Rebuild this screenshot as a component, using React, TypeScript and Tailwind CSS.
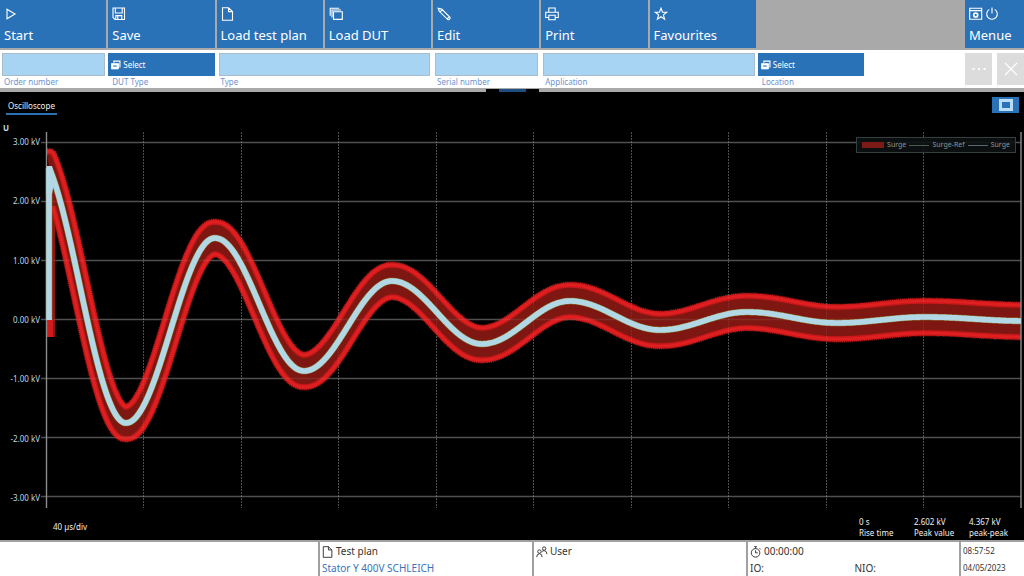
import React from "react";

type Point = [number, number];

const PLOT_WIDTH = 982;
const PLOT_HEIGHT = 376;
const AXIS_X = 6;
const END_X = 981;
const DIVISION = 97.5;

// turning points of the ringing coil response, in plot units
const extremes: Point[] = [
  [-6, 18],
  [86, 291],
  [175, 106],
  [264, 239],
  [352, 149],
  [442, 212],
  [530, 169],
  [620, 198],
  [707, 180],
  [797, 191],
  [885, 185],
  [985, 189],
];

// half axes of the rounded tolerance box swept along the curve
const TOLERANCE_X = 7;
const TOLERANCE_Y = 16;

function surgeAt(x: number) {
  const last = extremes.length - 2;
  let i = 0;
  while (i < last && x > extremes[i + 1][0]) i++;
  const [x0, y0] = extremes[i];
  const [x1, y1] = extremes[i + 1];
  const phase = Math.min(1, Math.max(0, (x - x0) / (x1 - x0)));
  return (y0 + y1) / 2 + ((y0 - y1) / 2) * Math.cos(Math.PI * phase);
}

function edgeAt(x: number, side: 1 | -1) {
  let edge = -Infinity;
  for (let d = -TOLERANCE_X; d <= TOLERANCE_X; d += 0.5) {
    const reach = TOLERANCE_Y * Math.sqrt(1 - Math.abs(d / TOLERANCE_X) ** 3);
    edge = Math.max(edge, side * surgeAt(Math.max(9, x + d)) + reach);
  }
  return side * edge;
}

function sample(from: number, fn: (x: number) => number): Point[] {
  const points: Point[] = [];
  for (let x = from; x <= END_X; x++) points.push([x, fn(x)]);
  return points;
}

const toPath = (points: Point[]) =>
  "M" + points.map(([x, y]) => `${x} ${y.toFixed(1)}`).join("L");

const upper = sample(7, (x) => edgeAt(x, -1));
const lower = sample(13, (x) => edgeAt(x, 1));
const bandPath = toPath([...upper, ...[...lower].reverse()]) + "Z";
const upperPath = toPath(upper);
const lowerPath = toPath(lower);
const surgePath = "M9 188L9 36L" + toPath(sample(10, surgeAt)).slice(1);

const ticks = [
  "3.00 kV",
  "2.00 kV",
  "1.00 kV",
  "0.00 kV",
  "-1.00 kV",
  "-2.00 kV",
  "-3.00 kV",
];

function Icon({
  children,
  className = "size-3.5",
}: {
  children: React.ReactNode;
  className?: string;
}) {
  return (
    <svg
      viewBox="0 0 14 14"
      className={className}
      fill="none"
      stroke="currentColor"
      strokeWidth="1.1"
      aria-hidden="true"
    >
      {children}
    </svg>
  );
}

const filePath = "M1.5 .8H7.5L11.5 4.6V13.2H1.5ZM7.5 .8V4.6H11.5";

const commands = [
  { label: "Start", icon: <path d="M3 2.2L11 7L3 11.8Z" /> },
  {
    label: "Save",
    icon: (
      <>
        <path d="M1 1H12.5V12.5H3L1 10.5Z" />
        <path d="M3.3 1V6H10.2V1M3.8 12.5V8.6H9.8V12.5M5.8 9V12" />
      </>
    ),
  },
  { label: "Load test plan", icon: <path d={filePath} /> },
  {
    label: "Load DUT",
    icon: (
      <>
        <path d="M4.5 4.7H13.3V12.4H4.5Z" />
        <path d="M3 10.6V3H12M1.2 8.8V1.2H10.2" />
      </>
    ),
  },
  {
    label: "Edit",
    icon: (
      <path d="M1.2 1.2L4.7 2.1L13 10.4Q13.4 11.4 12.6 12.2Q11.8 13 10.8 12.6L2.2 4.3ZM3 5L5.2 2.8M10 12L12.4 9.6" />
    ),
  },
  {
    label: "Print",
    icon: (
      <>
        <path d="M3.8 5V1H10.2V5M3.5 10.5H.7V5.2H13.3V10.5H10.5" />
        <path d="M3.8 8.2H10.2V12.8H3.8Z" />
      </>
    ),
  },
  {
    label: "Favourites",
    icon: (
      <path d="M7 1.2L8.5 5.3H12.8L9.4 7.9L10.6 12.2L7 9.7L3.4 12.2L4.6 7.9L1.2 5.3H5.5Z" />
    ),
  },
];

function CommandBar() {
  return (
    <nav className="grid h-12 grid-cols-[repeat(8,minmax(0,1fr))_158px] bg-[#a9a9a9]">
      {commands.map(({ label, icon }) => (
        <button
          key={label}
          type="button"
          className="mr-0.5 flex flex-col items-start gap-1 bg-[#2a72b8] pt-[7px] pl-1 text-white"
        >
          <Icon>{icon}</Icon>
          <span className="text-[13px] leading-5 whitespace-nowrap">{label}</span>
        </button>
      ))}
      <button
        type="button"
        className="col-start-9 flex w-[59px] flex-col items-start gap-1 justify-self-end bg-[#2a72b8] pt-[7px] pl-1 text-white"
      >
        <span className="flex gap-0.5">
          <Icon>
            <path d="M.7 1.2H12.7V12.3H.7ZM.7 3.6H12.7" />
            <circle cx="6.7" cy="8" r="2" strokeWidth="1.7" />
          </Icon>
          <Icon>
            <path d="M4.3 2.4A5.3 5.3 0 1 0 9.7 2.4M7 .4V6.6" />
          </Icon>
        </span>
        <span className="text-[13px] leading-5">Menue</span>
      </button>
    </nav>
  );
}

function TextField({
  id,
  label,
  className = "",
}: {
  id: string;
  label: string;
  className?: string;
}) {
  return (
    <div className={`flex flex-col ${className}`}>
      <input
        id={id}
        type="text"
        className="mr-[3px] ml-0.5 h-[23px] border border-[#a9bccb] bg-[#a8d4f4] px-1 text-[10px] text-black"
      />
      <label
        htmlFor={id}
        className="pl-1 text-[8px] leading-3 whitespace-nowrap text-[#6d93cf]"
      >
        {label}
      </label>
    </div>
  );
}

function SelectField({ id, label }: { id: string; label: string }) {
  return (
    <div className="flex flex-col">
      <button
        id={id}
        type="button"
        className="mr-0.5 flex h-[23px] items-center gap-0.5 bg-[#2a72b8] pl-[3px] text-[8px] text-white"
      >
        <Icon className="size-2.5">
          <path d="M.5 5H10.5V12.5H.5Z" fill="currentColor" />
          <path d="M4 4V1.5H12.5V10.5" strokeWidth="1.6" />
          <path d="M3 8.5H8" stroke="#2a72b8" strokeWidth="1.6" />
        </Icon>
        Select
      </button>
      <label
        htmlFor={id}
        className="pl-1 text-[8px] leading-3 whitespace-nowrap text-[#6d93cf]"
      >
        {label}
      </label>
    </div>
  );
}

function OrderBar() {
  return (
    <form className="grid h-10 grid-cols-[repeat(8,minmax(0,1fr))_158px] border-t-2 border-[#a9a9a9] bg-white pt-[3px]">
      <TextField id="order-number" label="Order number" />
      <SelectField id="dut-type" label="DUT Type" />
      <TextField id="type" label="Type" className="col-span-2" />
      <TextField id="serial-number" label="Serial number" />
      <TextField id="application" label="Application" className="col-span-2" />
      <SelectField id="location" label="Location" />
      <div className="flex h-8 justify-end gap-[5px]">
        <button
          type="button"
          aria-label="More"
          className="flex w-[27px] items-center justify-center bg-[#dcdcdc] text-white"
        >
          <Icon>
            <path d="M.5 7H2.5M6 7H8M11.5 7H13.5" strokeWidth="2" />
          </Icon>
        </button>
        <button
          type="button"
          aria-label="Close"
          className="flex w-[27px] items-center justify-center bg-[#dcdcdc] text-white"
        >
          <Icon>
            <path d="M1 1L13 13M13 1L1 13" />
          </Icon>
        </button>
      </div>
    </form>
  );
}

function Splitter() {
  return (
    <div className="flex h-1 items-end justify-center bg-[#a9a9a9]">
      <div className="flex h-[3px] w-[53px] justify-center bg-black">
        <div className="w-[27px] bg-[#1e4f80]" />
      </div>
    </div>
  );
}

function Grid({ opacity }: { opacity: number }) {
  return (
    <g stroke="#b4b4b4" strokeOpacity={opacity}>
      {ticks.map((tick, i) => (
        <path key={tick} d={`M1 ${10.5 + i * 59}H${END_X}`} strokeWidth="1.4" />
      ))}
      {[1, 2, 3, 4, 5, 6, 7, 8, 9].map((i) => (
        <path
          key={i}
          d={`M${Math.floor(AXIS_X + i * DIVISION) + 0.5} 0V376`}
          strokeDasharray="2 1"
        />
      ))}
    </g>
  );
}

function Plot() {
  return (
    <svg
      viewBox={`0 0 ${PLOT_WIDTH} ${PLOT_HEIGHT}`}
      preserveAspectRatio="none"
      className="absolute inset-0 size-full"
      role="img"
      aria-label="Surge voltage over time"
    >
      <Grid opacity={0.35} />
      <path d={bandPath} fill="#7e1711" />
      <path d="M7 45H15V205H7Z" fill="#8a1713" />
      <path d="M7 188H13V205H7Z" fill="#cf1b1c" />
      <g fill="none" stroke="#8e1915" strokeWidth="7" strokeDasharray="1 1">
        <path d={upperPath} />
        <path d={lowerPath} />
      </g>
      <g fill="none" stroke="#cb191b" strokeWidth="5.4">
        <path d={upperPath} />
        <path d={lowerPath} />
      </g>
      <g fill="none" stroke="#e01f21" strokeWidth="2.6">
        <path d={upperPath} />
        <path d={lowerPath} />
      </g>
      <Grid opacity={0.14} />
      <path d="M6.5 0V376M981 0V376" stroke="#8c8c8c" strokeWidth="1.4" />
      <g fill="none">
        <path d={surgePath} stroke="#8f7a32" strokeWidth="6.6" />
        <path d={surgePath} stroke="#b2d8e6" strokeWidth="5.6" />
      </g>
      <path d="M6.5 34H12L15 46L12 62H6.5Z" fill="#b2d8e6" />
    </svg>
  );
}

function Legend() {
  return (
    <div className="absolute top-[5px] right-1.5 flex h-4 w-40 items-center justify-between border border-[#34403f] bg-[#0c1112]/90 px-[5px] text-[7px] text-[#8d9496]">
      <span className="h-1.5 w-[22px] bg-[#7c1a15]" />
      <span>Surge</span>
      <span className="h-px w-5 bg-[#4d5a50]" />
      <span>Surge-Ref</span>
      <span className="h-px w-5 bg-[#56676b]" />
      <span>Surge</span>
    </div>
  );
}

function Metric({ value, name }: { value: string; name: string }) {
  return (
    <div className="w-[55px] whitespace-nowrap">
      <div>{value}</div>
      <div>{name}</div>
    </div>
  );
}

function Oscilloscope() {
  return (
    <main className="flex flex-1 flex-col bg-black text-[8px] text-[#f0f0f0]">
      <div className="flex h-8 items-start justify-between pt-[5px] pr-[5px] pl-1.5">
        <button
          type="button"
          className="border-b-2 border-[#2a72b8] px-0.5 pt-px text-[8px] leading-[15px]"
        >
          Oscilloscope
        </button>
        <button
          type="button"
          aria-label="Full screen"
          className="flex h-4 w-[27px] items-center justify-center bg-[#2a72b8]"
        >
          <svg viewBox="0 0 14 12" className="h-3 w-3.5" aria-hidden="true">
            <path d="M0 0H14V12H0Z" fill="#bcdcf6" />
            <path d="M3 3H11V9H3Z" fill="#2a72b8" />
          </svg>
        </button>
      </div>
      <div className="flex flex-1">
        <div className="flex w-10 flex-col text-[#b9dbe6]">
          <div className="flex h-2 items-center pl-[3px] font-bold">U</div>
          <div className="flex flex-1 flex-col justify-between text-right leading-5">
            {ticks.map((tick) => (
              <div key={tick} className="whitespace-nowrap">
                {tick}
              </div>
            ))}
          </div>
        </div>
        <div className="relative mt-2 mr-0.5 flex-1">
          <Plot />
          <Legend />
        </div>
      </div>
      <div className="flex h-8 items-end justify-between pb-0.5 pl-[53px] leading-[11px]">
        <span className="pb-1.5">40 µs/div</span>
        <div className="flex">
          <Metric value="0 s" name="Rise time" />
          <Metric value="2.602 kV" name="Peak value" />
          <Metric value="4.367 kV" name="peak-peak" />
        </div>
      </div>
    </main>
  );
}

function StatusBar() {
  return (
    <footer className="grid h-9 grid-cols-[318fr_214fr_214fr_213fr_65fr] border-t-2 border-[#a0a0a0] bg-white text-[10px] leading-[17px] whitespace-nowrap text-[#333]">
      <div />
      <div className="border-l-2 border-[#a0a0a0] pt-px pl-0.5">
        <div className="flex items-center gap-0.5">
          <Icon className="size-3">
            <path d={filePath} />
          </Icon>
          Test plan
        </div>
        <div className="text-[#3a73b9]">Stator Y 400V SCHLEICH</div>
      </div>
      <div className="border-l-2 border-[#a0a0a0] pt-px pl-0.5">
        <div className="flex items-center gap-0.5">
          <Icon className="size-3">
            <circle cx="4" cy="6.5" r="2" />
            <circle cx="9.5" cy="3" r="2" />
            <path d="M.8 13Q1 9 4 9Q7 9 7.2 13M6.5 7Q8 5.3 9.5 5.4Q12.5 5.5 12.8 9.5" />
          </Icon>
          User
        </div>
      </div>
      <div className="border-l-2 border-[#a0a0a0] pt-px pl-0.5">
        <div className="flex items-center gap-0.5">
          <Icon className="size-3">
            <circle cx="6.5" cy="8" r="5" />
            <path d="M6.5 5V8H9M5 .8H8M6.5 .8V3M11 2.5L12.5 4" />
          </Icon>
          00:00:00
        </div>
        <div className="grid grid-cols-2">
          <span>IO:</span>
          <span>NIO:</span>
        </div>
      </div>
      <div className="border-l-2 border-[#a0a0a0] pl-0.5 text-[8px]">
        <div>08:57:52</div>
        <div>04/05/2023</div>
      </div>
    </footer>
  );
}

export default function App() {
  return (
    <div className="flex min-h-screen flex-col bg-[#a9a9a9] font-['Noto_Sans','Open_Sans',sans-serif]">
      <CommandBar />
      <OrderBar />
      <Splitter />
      <Oscilloscope />
      <StatusBar />
    </div>
  );
}
